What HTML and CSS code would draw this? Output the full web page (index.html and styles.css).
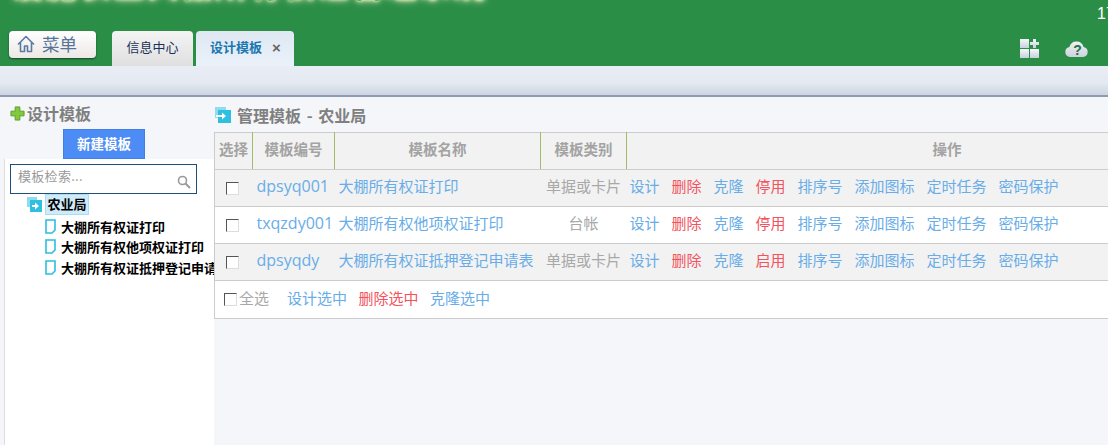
FILE: index.html
```html
<!DOCTYPE html>
<html lang="zh">
<head>
<meta charset="utf-8">
<title>设计模板</title>
<link rel="stylesheet" href="styles.css">
</head>
<body>
<header class="top">
  <div class="brand">
    <h1 class="brand-title">设施农业大棚所有权证管理系统</h1>
    <span class="clock">17:</span>
  </div>
  <div class="nav">
    <button class="menu-btn" type="button">
      <svg class="menu-icon" viewBox="0 0 18 18" width="18" height="18"><path d="M1 9.500 9 1.500l8 8M3.500 7.500v9h4v-5.500h3v5.500h4v-9" fill="none" stroke="#5a7ba0" stroke-width="1.600" stroke-linejoin="round"/></svg>
      <span>菜单</span>
    </button>
    <div class="tab">信息中心</div>
    <div class="tab tab-active"><span>设计模板</span><span class="tab-close">×</span></div>
    <div class="tools">
      <svg viewBox="0 0 19 19" width="19" height="19"><defs><linearGradient id="tile" x1="0" y1="0" x2="0" y2="1"><stop offset="0" stop-color="#f6f8fa"/><stop offset="1" stop-color="#c8d0de"/></linearGradient></defs><path d="M0 0h9v9H0z" fill="url(#tile)"/><path d="M0 10h9v9H0z" fill="url(#tile)"/><path d="M10 10h9v9h-9z" fill="url(#tile)"/><path d="M13 0h3v3h3v3h-3v3h-3V6h-3V3h3z" fill="url(#tile)"/></svg>
      <svg viewBox="0 0 23 18" width="23" height="18"><defs><linearGradient id="cloud" x1="0" y1="0" x2="0" y2="1"><stop offset="0" stop-color="#eef1f5"/><stop offset="1" stop-color="#cdd3dd"/></linearGradient></defs><path d="M5 18a5 5 0 0 1-.6-9.900 7.300 7.300 0 0 1 14.200 0A5 5 0 0 1 18 18z" fill="url(#cloud)"/><text class="cloud-mark" x="12.500" y="16">?</text></svg>
    </div>
  </div>
</header>
<div class="subbar"></div>
<div class="content">
  <aside class="side">
    <div class="side-title">
      <svg viewBox="0 0 16 16" width="15" height="15"><path d="M5.500 1h5v4.500H15v5h-4.500V15h-5v-4.500H1v-5h4.500z" fill="#84c83c" stroke="#5a9c24"/></svg>
      <span>设计模板</span>
    </div>
    <div class="new-row"><button class="new-btn" type="button">新建模板</button></div>
    <div class="tree-panel">
      <div class="search">
        <span>模板检索...</span>
        <svg viewBox="0 0 14 14" width="14" height="14"><circle cx="5.500" cy="5.500" r="4" fill="none" stroke="#999" stroke-width="1.600"/><path d="M8.500 8.500 13 13" stroke="#999" stroke-width="2"/></svg>
      </div>
      <div class="tree-root">
        <svg viewBox="0 0 15 15" width="15" height="15"><path d="M0 0h10v3H3v7H0z" fill="#8fdcf0"/><path d="M3 3h12v12H3z" fill="#2fbfe0"/><path d="M5 8h3V5.500L12 9l-4 3.500V10H5z" fill="#fff"/></svg>
        <span class="tree-root-label">农业局</span>
      </div>
      <ul class="tree-list">
        <li class="tree-item"><svg viewBox="0 0 11 15" width="11" height="15"><path d="M1 1h9v10l-3 3H1z" fill="#fff" stroke="#2cbde0" stroke-width="1.600"/></svg><span>大棚所有权证打印</span></li>
        <li class="tree-item"><svg viewBox="0 0 11 15" width="11" height="15"><path d="M1 1h9v10l-3 3H1z" fill="#fff" stroke="#2cbde0" stroke-width="1.600"/></svg><span>大棚所有权他项权证打印</span></li>
        <li class="tree-item"><svg viewBox="0 0 11 15" width="11" height="15"><path d="M1 1h9v10l-3 3H1z" fill="#fff" stroke="#2cbde0" stroke-width="1.600"/></svg><span>大棚所有权证抵押登记申请表</span></li>
      </ul>
    </div>
  </aside>
  <main class="main">
    <div class="main-title">
      <svg viewBox="0 0 16 16" width="16" height="16"><path d="M0 0h11v3H3v8H0z" fill="#8fdcf0"/><path d="M3 3h13v13H3z" fill="#2fbfe0"/><path d="M1 8h6V5.500L11 9l-4 3.500V10H1z" fill="#fff"/></svg>
      <span>管理模板 - 农业局</span>
    </div>
    <table class="grid">
      <colgroup><col class="c-check"><col class="c-code"><col class="c-name"><col class="c-type"><col></colgroup>
      <thead>
        <tr><th>选择</th><th>模板编号</th><th>模板名称</th><th>模板类别</th><th>操作</th></tr>
      </thead>
      <tbody>
        <tr class="odd">
          <td class="cell-check"><input class="box" type="checkbox"></td>
          <td class="cell-code"><a>dpsyq001</a></td>
          <td class="cell-name"><a>大棚所有权证打印</a></td>
          <td class="cell-type">单据或卡片</td>
          <td><div class="ops"><a>设计</a><a class="danger">删除</a><a>克隆</a><a class="danger">停用</a><a>排序号</a><a>添加图标</a><a>定时任务</a><a>密码保护</a></div></td>
        </tr>
        <tr>
          <td class="cell-check"><input class="box" type="checkbox"></td>
          <td class="cell-code"><a>txqzdy001</a></td>
          <td class="cell-name"><a>大棚所有权他项权证打印</a></td>
          <td class="cell-type">台帐</td>
          <td><div class="ops"><a>设计</a><a class="danger">删除</a><a>克隆</a><a class="danger">停用</a><a>排序号</a><a>添加图标</a><a>定时任务</a><a>密码保护</a></div></td>
        </tr>
        <tr class="odd">
          <td class="cell-check"><input class="box" type="checkbox"></td>
          <td class="cell-code"><a>dpsyqdy</a></td>
          <td class="cell-name"><a>大棚所有权证抵押登记申请表</a></td>
          <td class="cell-type">单据或卡片</td>
          <td><div class="ops"><a>设计</a><a class="danger">删除</a><a>克隆</a><a class="danger">启用</a><a>排序号</a><a>添加图标</a><a>定时任务</a><a>密码保护</a></div></td>
        </tr>
        <tr class="foot">
          <td colspan="5"><div class="bulk"><input class="box" type="checkbox"><span class="all">全选</span><a class="bulk-first">设计选中</a><a class="danger">删除选中</a><a>克隆选中</a></div></td>
        </tr>
      </tbody>
    </table>
  </main>
</div>
</body>
</html>
```

FILE: styles.css
```css
* { box-sizing: border-box; }
html, body { height: 100%; }
body {
  margin: 0;
  overflow: hidden;
  display: flex;
  flex-direction: column;
  background: #f5f6f9;
  font-family: "Noto Sans CJK SC", "Liberation Sans", sans-serif;
  font-size: 15px;
  color: #999;
}
svg { display: block; flex: none; }

.top { height: 66px; flex: none; background: #2b8e47; overflow: hidden; }
.brand { height: 31px; display: flex; justify-content: space-between; align-items: flex-start; }
.brand-title {
  margin: -35px 0 0 11px;
  font-size: 32px;
  line-height: 36px;
  font-weight: 700;
  letter-spacing: 2px;
  white-space: nowrap;
  color: #2cb84c;
  text-shadow: 0 0 5px #f6f3c4, 0 0 8px #f6f3c4, 0 0 3px #f6f3c4;
}
.clock { margin: 5px -9px 0 0; width: 20px; font: 16px/18px "Liberation Sans", sans-serif; color: #fff; white-space: nowrap; }
.nav { height: 35px; display: flex; align-items: flex-start; padding-left: 9px; }
.menu-btn {
  width: 87px;
  height: 27px;
  display: flex;
  align-items: center;
  gap: 7px;
  padding: 0 0 2px 8px;
  border: 0;
  border-radius: 4px;
  background: linear-gradient(#fff, #ece8e6);
  box-shadow: 0 1px 2px rgba(0,0,0,.5);
  font: 17.500px "Noto Sans CJK SC", sans-serif;
  color: #55759b;
}
.tab {
  width: 81px;
  height: 35px;
  margin-left: 16px;
  text-align: center;
  font-size: 13px;
  line-height: 31px;
  color: #1a3358;
  border-radius: 4px 4px 0 0;
  background: linear-gradient(#f4f4f4, #dfdfdf);
}
.tab-active {
  width: 98px;
  margin-left: 3px;
  padding-left: 14px;
  display: flex;
  gap: 10px;
  font-weight: 700;
  color: #1a78b0;
  background: linear-gradient(#dfe8f3, #eaf1f9);
}
.tab-close { color: #666; font: 700 15px/33px "Liberation Sans", sans-serif; }
.tools { margin-left: auto; margin-top: 8px; padding-right: 20px; display: flex; gap: 26px; }
.cloud-mark { font: 700 14px "Liberation Sans", sans-serif; fill: #2b6e45; text-anchor: middle; }

.subbar {
  height: 31px;
  flex: none;
  background: linear-gradient(#e9eef6, #e3e8f1 60%, #cdd5e0);
  border-bottom: 2px solid #8c9db3;
}
.content { flex: 1; min-height: 0; display: flex; }

.side { width: 214px; flex: none; display: flex; flex-direction: column; }
.side-title {
  height: 32px;
  padding-left: 10px;
  display: flex;
  align-items: center;
  gap: 2px;
  font-size: 16px;
  font-weight: 700;
  color: #808080;
}
.new-row { padding-left: 63px; }
.new-btn {
  display: block;
  width: 82px;
  height: 30px;
  padding: 0 0 2px;
  border: 1px solid #3f7fe8;
  background: #4d8cf5;
  color: #fff;
  font: 700 13.500px "Noto Sans CJK SC", sans-serif;
}
.tree-panel {
  flex: 1;
  margin-left: 4px;
  padding: 5px 0 0 5px;
  background: #fff;
  border-left: 1px solid #ddd;
  overflow: hidden;
}
.search {
  width: 187px;
  height: 30px;
  padding: 0 5px 0 7px;
  display: flex;
  align-items: center;
  justify-content: space-between;
  border: 1px solid #1d4f78;
  font-size: 13px;
  letter-spacing: .3px;
  color: #999;
}
.search span { margin-top: -8px; }
.search svg { margin-top: 6px; }
.tree-root { margin: 0 0 0 17px; display: flex; align-items: center; gap: 3px; }
.tree-root-label {
  width: 44px;
  height: 21px;
  text-align: center;
  font-size: 13px;
  font-weight: 700;
  line-height: 18px;
  color: #000;
  background: #cfeaf8;
  border: 1px solid #a8def5;
}
.tree-list { list-style: none; margin: 0; padding: 1px 0 0 35px; }
.tree-item {
  height: 20.500px;
  display: flex;
  align-items: center;
  gap: 5px;
  white-space: nowrap;
  font-size: 13px;
  font-weight: 700;
  color: #000;
}

.main { flex: 1; min-width: 0; overflow: hidden; }
.main-title {
  height: 35px;
  padding-left: 1px;
  display: flex;
  align-items: center;
  gap: 6px;
  font-size: 16px;
  font-weight: 700;
  word-spacing: 2px;
  color: #808080;
}
.grid { width: 1053px; table-layout: fixed; border-collapse: collapse; background: #fff; border-left: 1px solid #ccc; }
.c-check { width: 38px; }
.c-code { width: 82px; }
.c-name { width: 206px; }
.c-type { width: 86px; }
.grid th {
  height: 37px;
  padding: 0 0 5px;
  font-size: 14.500px;
  font-weight: 700;
  color: #a3a3a3;
  background: #f2f2f2;
  border-top: 1px solid #ccc;
  border-bottom: 1px solid #ccc;
  border-right: 1px solid #a3ba6a;
}
.grid th:last-child { border-right: 0; }
.grid td { height: 37px; padding: 0 0 5px; border-bottom: 1px solid #ccc; white-space: nowrap; }
.grid .odd td { background: #f2f2f2; }
.grid td.cell-check { padding: 0; }
.grid a { color: #68ade8; }
.grid a.danger { color: #f2545e; }
.box {
  appearance: none;
  display: block;
  width: 13px;
  height: 13px;
  margin: 0;
  border: 1px solid;
  border-color: #555 #ddd #ddd #555;
  background: #fff;
}
.cell-check .box { margin-left: 11px; }
.grid .cell-code { padding-left: 4px; font: 16px "Open Sans", sans-serif; }
.grid .cell-name { padding-left: 4px; overflow: hidden; }
.cell-type { text-align: center; color: #a8a8a8; }
.ops { display: flex; gap: 12px; padding-left: 3px; }
.foot td { height: 38px; }
.bulk { display: flex; align-items: center; padding-left: 9px; }
.bulk .box { margin-top: 5px; }
.all { margin-left: 2px; color: #a8a8a8; }
.bulk a { margin-right: 11.500px; }
.bulk-first { margin-left: 18px; }
```
